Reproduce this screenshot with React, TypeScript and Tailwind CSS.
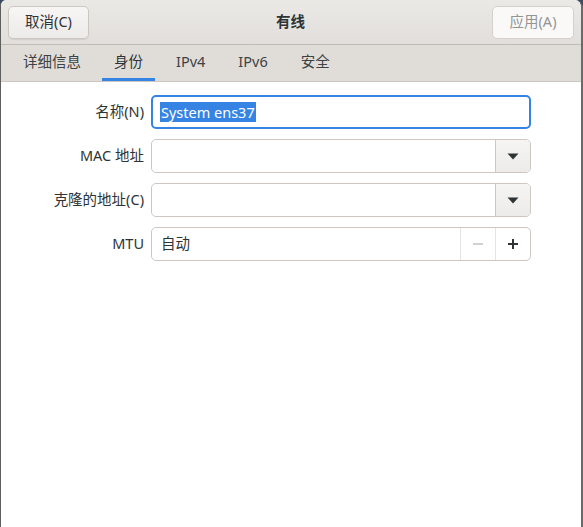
import React, { useState } from 'react';

const font = { fontFamily: '"Noto Sans", "Noto Sans CJK SC", sans-serif' };

const tabs = ['详细信息', '身份', 'IPv4', 'IPv6', '安全'];

const Arrow: React.FC = () => (
  <svg width="12" height="7" viewBox="0 0 12 7">
    <path d="M0.5 0.5 L11.5 0.5 L6 6.5 Z" fill="#2e3436" />
  </svg>
);

const Field: React.FC<{ label: string; children: React.ReactNode }> = ({ label, children }) => (
  <div className="flex items-center">
    <span className="w-[150px] text-right text-[#2e3436] pr-[7px] shrink-0">{label}</span>
    {children}
  </div>
);

const App: React.FC = () => {
  const [active, setActive] = useState(1);

  return (
    <div className="w-[583px] h-[527px] bg-[#3b4a63] overflow-hidden" style={font}>
      <div className="w-full h-full bg-white border-l border-[#5e5e5e] border-r-2 border-r-[#6a6a6a] rounded-tl-[6px] rounded-tr-[8px] overflow-hidden flex flex-col text-[14.5px]">
        {/* 标题栏 */}
        <div className="h-[45px] shrink-0 flex items-center justify-between px-[7px] bg-gradient-to-b from-[#ebe9e6] to-[#e1dedb] border-b border-[#c0bcb7]">
          <button className="w-[81px] h-[33px] rounded-[5px] border border-[#cdc7c2] bg-gradient-to-b from-[#f7f6f5] to-[#edebe9] shadow-[0_1px_1px_rgba(0,0,0,0.08)] text-[#2e3436]">
            取消(C)
          </button>
          <span className="font-bold text-[#2e3436]">有线</span>
          <button
            disabled
            className="w-[82px] h-[33px] rounded-[5px] border border-[#d5d0cc] bg-[#faf9f8] text-[#929595]"
          >
            应用(A)
          </button>
        </div>

        {/* 选项卡 */}
        <div className="h-[37px] shrink-0 flex items-stretch gap-[9px] pl-[10px] bg-[#e0ddd9] border-b border-[#cdc7c2]">
          {tabs.map((t, i) => (
            <button
              key={t}
              onClick={() => setActive(i)}
              className={`px-[12px] pt-[1px] border-b-[3px] ${
                i === active ? 'border-[#3584e4] text-[#2e3436]' : 'border-transparent text-[#3d4244]'
              }`}
            >
              {t}
            </button>
          ))}
        </div>

        {/* 内容 */}
        <div className="flex flex-col gap-[10px] pt-[13px]">
          <Field label="名称(N)">
            <div className="w-[380px] h-[34px] rounded-[5px] border-2 border-[#3584e4] flex items-center pl-[7px]">
              <span className="bg-[#3584e4] text-white px-[1px] leading-[20px]">System ens37</span>
            </div>
          </Field>

          <Field label="MAC 地址">
            <div className="w-[380px] h-[34px] rounded-[5px] border border-[#cdc7c2] flex overflow-hidden">
              <div className="flex-1" />
              <div className="w-[35px] border-l border-[#cdc7c2] bg-gradient-to-b from-[#f6f5f4] to-[#edebe9] flex items-center justify-center">
                <Arrow />
              </div>
            </div>
          </Field>

          <Field label="克隆的地址(C)">
            <div className="w-[380px] h-[34px] rounded-[5px] border border-[#cdc7c2] flex overflow-hidden">
              <div className="flex-1" />
              <div className="w-[35px] border-l border-[#cdc7c2] bg-gradient-to-b from-[#f6f5f4] to-[#edebe9] flex items-center justify-center">
                <Arrow />
              </div>
            </div>
          </Field>

          <Field label="MTU">
            <div className="w-[380px] h-[34px] rounded-[5px] border border-[#cdc7c2] flex overflow-hidden">
              <div className="flex-1 flex items-center pl-[9px] text-[#2e3436]">自动</div>
              <div className="w-[35px] border-l border-[#e6e3e0] flex items-center justify-center">
                <svg width="12" height="12" viewBox="0 0 12 12">
                  <path d="M1 6 H11" stroke="#d0d1d1" strokeWidth="2" />
                </svg>
              </div>
              <div className="w-[35px] border-l border-[#e6e3e0] flex items-center justify-center">
                <svg width="12" height="12" viewBox="0 0 12 12">
                  <path d="M1 6 H11 M6 1 V11" stroke="#2e3436" strokeWidth="2" />
                </svg>
              </div>
            </div>
          </Field>
        </div>
      </div>
    </div>
  );
};

export default App;
